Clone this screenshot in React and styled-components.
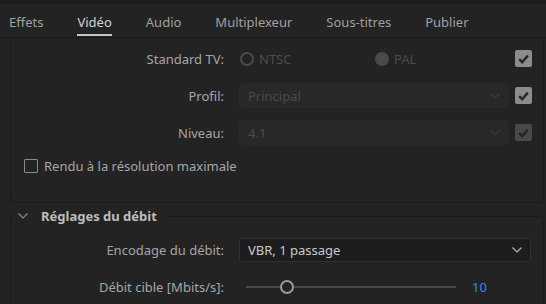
import React from 'react';
import styled, { createGlobalStyle } from 'styled-components';

const GlobalStyle = createGlobalStyle`
  html, body {
    margin: 0;
    padding: 0;
    background: #232323;
  }
  body {
    font-family: "Noto Sans", "Open Sans", sans-serif;
    font-size: 13px;
    color: #a6a6a6;
  }
`;

const Screen = styled.div`
  width: 546px;
  height: 304px;
  overflow: hidden;
  background: #232323;
`;

const TopStrip = styled.div`
  height: 4px;
  background: #1d1d1d;
`;

const TabBar = styled.div`
  display: flex;
  align-items: flex-start;
  gap: 34px;
  height: 33px;
  padding-left: 9px;
  border-bottom: 1px solid #1a1a1a;
`;

const Tab = styled.div`
  padding: 9px 0 3px;
  line-height: 18px;
  color: ${({ $active }) => ($active ? '#d2d2d2' : '#a0a0a0')};
  border-bottom: 2px solid ${({ $active }) => ($active ? '#c4c4c4' : 'transparent')};
`;

const Panel = styled.div`
  height: 165px;
  margin: 0 2px 0 10px;
  padding-top: 2px;
  box-sizing: border-box;
  border: 1px solid #1b1b1b;
  border-top: none;
  border-radius: 0 0 4px 4px;
`;

const Row = styled.div`
  display: flex;
  align-items: center;
  height: ${({ $h }) => $h || 37}px;
`;

const Label = styled.div`
  width: 213px;
  margin-right: 15px;
  text-align: right;
  color: #a6a6a6;
  white-space: nowrap;
`;

const Radios = styled.div`
  display: flex;
  align-items: center;
  width: 270px;
`;

const Radio = styled.div`
  display: flex;
  align-items: center;
  gap: 5px;
  width: 136px;
  color: #4c4c4c;
  &::before {
    content: '';
    width: 10px;
    height: 10px;
    border-radius: 50%;
    margin-left: 1px;
    box-sizing: content-box;
    border: 2px solid #4a4a4a;
    background: ${({ $checked }) => ($checked ? '#4a4a4a' : 'transparent')};
  }
`;

const Select = styled.div`
  display: flex;
  align-items: center;
  justify-content: space-between;
  box-sizing: border-box;
  width: ${({ $w }) => $w}px;
  height: ${({ $dark }) => ($dark ? 24 : 25)}px;
  padding: 0 8px 0 8px;
  border-radius: 3px;
  background: ${({ $dark }) => ($dark ? '#1d1d1d' : '#282828')};
  border: 1px solid ${({ $dark }) => ($dark ? '#303030' : '#282828')};
  color: ${({ $dark }) => ($dark ? '#cacaca' : '#4a4a4a')};
`;

const Chevron = ({ color }) => (
  <svg width="10" height="6" viewBox="0 0 10 6">
    <path d="M0.5 0.5 L5 5 L9.5 0.5" fill="none" stroke={color} strokeWidth="1.2" />
  </svg>
);

const CheckBox = styled.div`
  display: flex;
  align-items: center;
  justify-content: center;
  width: 17px;
  height: 17px;
  margin-left: 6px;
  border-radius: 2px;
  background: ${({ $disabled }) => ($disabled ? '#494949' : '#8c8c8c')};
`;

const Tick = () => (
  <svg width="11" height="10" viewBox="0 0 11 10">
    <path d="M1.2 5.2 L4.2 8.2 L9.8 1.6" fill="none" stroke="#262626" strokeWidth="2.4" />
  </svg>
);

const FullRes = styled.label`
  display: flex;
  align-items: center;
  gap: 6px;
  padding-left: 13px;
  color: #a6a6a6;
`;

const EmptyBox = styled.span`
  width: 12px;
  height: 12px;
  border: 1.5px solid #8a8a8a;
  border-radius: 1px;
`;

const Section = styled.fieldset`
  margin: 4px 2px 0 10px;
  padding: 0;
  min-width: 0;
  height: 110px;
  border: 1px solid #1b1b1b;
  border-radius: 4px;
`;

const Legend = styled.legend`
  display: flex;
  align-items: center;
  gap: 13px;
  margin-left: 1px;
  padding: 0 8px 0 6px;
  line-height: 18px;
  font-weight: bold;
  color: #bdbdbd;
`;

const SectionBody = styled.div`
  padding-top: 6px;
`;

const Slider = styled.div`
  display: flex;
  align-items: center;
  width: 210px;
  height: 16px;
  margin-left: 7px;
  position: relative;
  &::before {
    content: '';
    position: absolute;
    left: 0;
    right: 0;
    top: 7px;
    height: 2px;
    background: #4a4a4a;
  }
`;

const Thumb = styled.span`
  position: absolute;
  top: 1px;
  width: 10px;
  height: 10px;
  border-radius: 50%;
  border: 2.5px solid #9a9a9a;
  background: #232323;
`;

const Value = styled.span`
  margin-left: 16px;
  color: #2d8de8;
`;

export default function App() {
  const tabs = ['Effets', 'Vidéo', 'Audio', 'Multiplexeur', 'Sous-titres', 'Publier'];
  return (
    <Screen>
      <GlobalStyle />
      <TopStrip />
      <TabBar>
        {tabs.map((t) => (
          <Tab key={t} $active={t === 'Vidéo'}>{t}</Tab>
        ))}
      </TabBar>
      <Panel>
        <Row>
          <Label>Standard TV:</Label>
          <Radios>
            <Radio>NTSC</Radio>
            <Radio $checked>PAL</Radio>
          </Radios>
          <CheckBox><Tick /></CheckBox>
        </Row>
        <Row>
          <Label>Profil:</Label>
          <Select $w={270}>
            Principal
            <Chevron color="#3c3c3c" />
          </Select>
          <CheckBox><Tick /></CheckBox>
        </Row>
        <Row>
          <Label>Niveau:</Label>
          <Select $w={270}>
            4.1
            <Chevron color="#3c3c3c" />
          </Select>
          <CheckBox $disabled><Tick /></CheckBox>
        </Row>
        <Row $h={29}>
          <FullRes>
            <EmptyBox />
            Rendu à la résolution maximale
          </FullRes>
        </Row>
      </Panel>
      <Section>
        <Legend>
          <Chevron color="#8a8a8a" />
          Réglages du débit
        </Legend>
        <SectionBody>
          <Row>
            <Label>Encodage du débit:</Label>
            <Select $w={292} $dark>
              VBR, 1 passage
              <Chevron color="#b4b4b4" />
            </Select>
          </Row>
          <Row>
            <Label>Débit cible [Mbits/s]:</Label>
            <Slider>
              <Thumb style={{ left: 34 }} />
            </Slider>
            <Value>10</Value>
          </Row>
        </SectionBody>
      </Section>
    </Screen>
  );
}
